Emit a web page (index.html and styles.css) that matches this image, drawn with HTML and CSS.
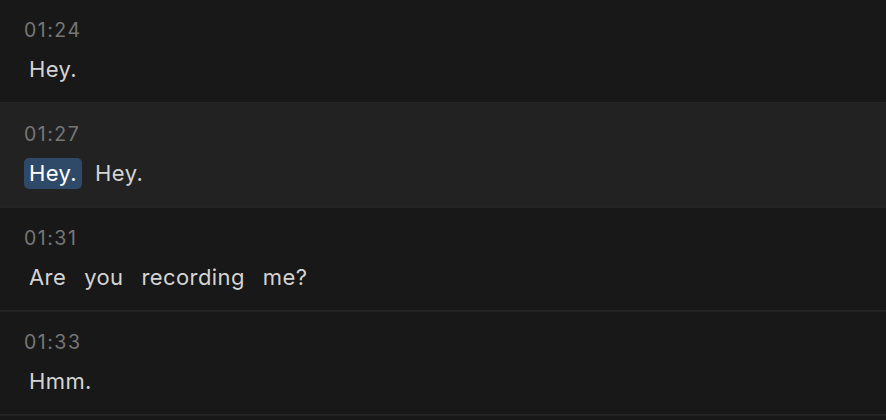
FILE: index.html
```html
<!DOCTYPE html>
<html lang="en">
<head>
<meta charset="utf-8">
<title>Transcript</title>
<link rel="stylesheet" href="styles.css">
</head>
<body>
<main class="transcript">
  <section class="segment">
    <div class="time">01:24</div>
    <div class="words"><span class="word">Hey.</span></div>
  </section>
  <section class="segment segment--active">
    <div class="time">01:27</div>
    <div class="words"><span class="word word--current">Hey.</span><span class="word">Hey.</span></div>
  </section>
  <section class="segment">
    <div class="time">01:31</div>
    <div class="words"><span class="word">Are</span><span class="word">you</span><span class="word">recording</span><span class="word">me?</span></div>
  </section>
  <section class="segment">
    <div class="time">01:33</div>
    <div class="words"><span class="word">Hmm.</span></div>
  </section>
</main>
</body>
</html>
```

FILE: styles.css
```css
html, body {
  margin: 0;
  padding: 0;
  background: #181818;
}
body {
  font-family: Inter, "Noto Sans", "Liberation Sans", sans-serif;
  overflow: hidden;
  height: 420px;
}
.transcript {
  display: flex;
  flex-direction: column;
}
.segment {
  height: 102px;
  box-sizing: content-box;
  padding: 0 24px;
  border-bottom: 2px solid #242424;
  display: flex;
  flex-direction: column;
}
.segment--active {
  background: #222222;
}
.time {
  margin-top: 17px;
  font-size: 19.5px;
  line-height: 26px;
  letter-spacing: 1.5px;
  color: #767676;
}
.words {
  margin-top: 11px;
  display: flex;
  gap: 8px;
}
.word {
  font-size: 22px;
  line-height: 27px;
  padding: 2px 5px;
  border-radius: 5px;
  letter-spacing: 0.4px;
  color: #d4d4d4;
}
.word--current {
  background: #2f4a69;
  color: #ffffff;
}
```
